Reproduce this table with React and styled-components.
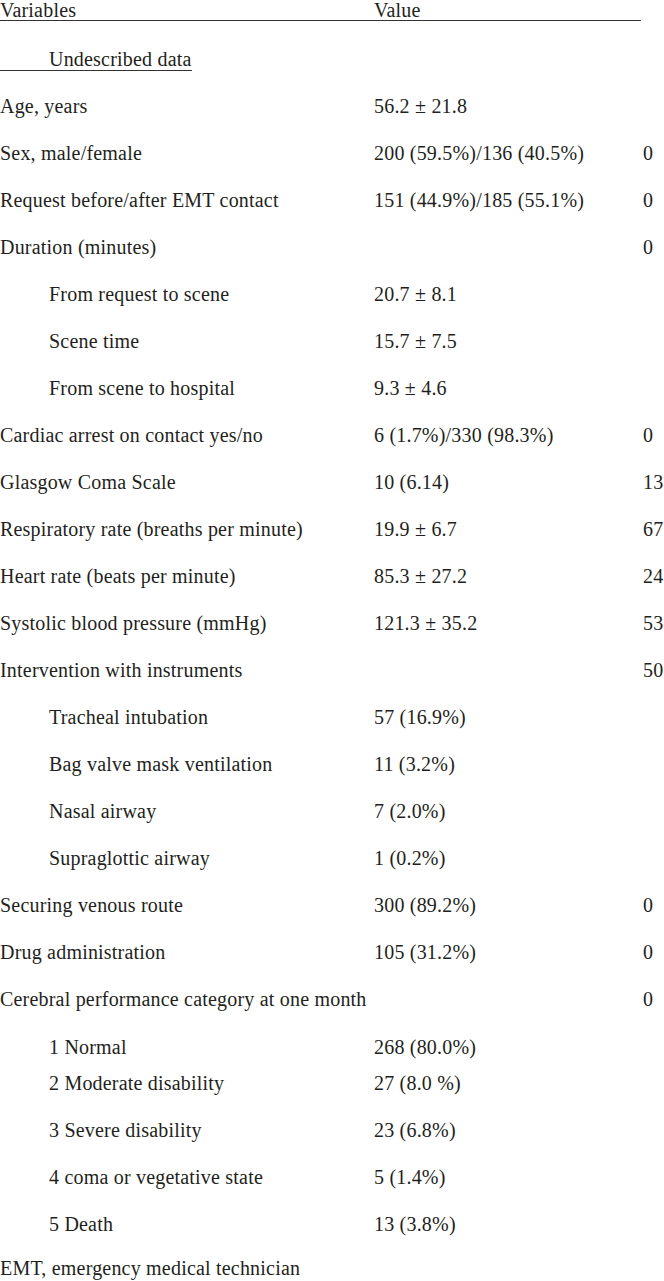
import React from "react";
import styled, { createGlobalStyle } from "styled-components";

const rows = [
	{ label: "Age, years", value: "56.2 ± 21.8" },
	{ label: "Sex, male/female", value: "200 (59.5%)/136 (40.5%)", missing: "0" },
	{ label: "Request before/after EMT contact", value: "151 (44.9%)/185 (55.1%)", missing: "0" },
	{ label: "Duration (minutes)", missing: "0" },
	{ label: "From request to scene", value: "20.7 ± 8.1", sub: true },
	{ label: "Scene time", value: "15.7 ± 7.5", sub: true },
	{ label: "From scene to hospital", value: "9.3 ± 4.6", sub: true },
	{ label: "Cardiac arrest on contact yes/no", value: "6 (1.7%)/330 (98.3%)", missing: "0" },
	{ label: "Glasgow Coma Scale", value: "10 (6.14)", missing: "13" },
	{ label: "Respiratory rate (breaths per minute)", value: "19.9 ± 6.7", missing: "67" },
	{ label: "Heart rate (beats per minute)", value: "85.3 ± 27.2", missing: "24" },
	{ label: "Systolic blood pressure (mmHg)", value: "121.3 ± 35.2", missing: "53" },
	{ label: "Intervention with instruments", missing: "50" },
	{ label: "Tracheal intubation", value: "57 (16.9%)", sub: true },
	{ label: "Bag valve mask ventilation", value: "11 (3.2%)", sub: true },
	{ label: "Nasal airway", value: "7 (2.0%)", sub: true },
	{ label: "Supraglottic airway", value: "1 (0.2%)", sub: true },
	{ label: "Securing venous route", value: "300 (89.2%)", missing: "0" },
	{ label: "Drug administration", value: "105 (31.2%)", missing: "0" },
	{ label: "Cerebral performance category at one month", missing: "0" },
	{ label: "1 Normal", value: "268 (80.0%)", sub: true, h: 48 },
	{ label: "2 Moderate disability", value: "27 (8.0 %)", sub: true, h: 36 },
	{ label: "3 Severe disability", value: "23 (6.8%)", sub: true },
	{ label: "4 coma or vegetative state", value: "5 (1.4%)", sub: true },
	{ label: "5 Death", value: "13 (3.8%)", sub: true },
];

export default function App() {
	return (
		<>
			<GlobalStyle />
			<Table>
				<Header>
					<Cell>Variables</Cell>
					<Cell>Value</Cell>
				</Header>

				<Row>
					<Cell>
						<Underlined>Undescribed data</Underlined>
					</Cell>
				</Row>

				{rows.map((r) => (
					<Row key={r.label} h={r.h}>
						<Cell $sub={r.sub}>{r.label}</Cell>
						<Cell>{r.value}</Cell>
						<Cell>{r.missing}</Cell>
					</Row>
				))}

				<Footnote>EMT, emergency medical technician</Footnote>
			</Table>
		</>
	);
}

const GlobalStyle = createGlobalStyle`
	body {
		margin: 0;
		background: #ffffff;
		color: #231f20;
		font-family: "Liberation Serif", "Times New Roman", serif;
		font-size: 20px;
		letter-spacing: 0.2px;
	}
`;

const Table = styled.div`
	display: flex;
	flex-direction: column;
	width: 664px;
`;

const Header = styled.div`
	display: grid;
	grid-template-columns: 374px 267px;
	width: 641px;
	height: 20px;
	line-height: 20px;
	margin-bottom: 3px;
	border-bottom: 1.5px solid #333;
`;

const Row = styled.div`
	display: grid;
	grid-template-columns: 374px 269px 1fr;
	align-items: end;
	height: ${(p) => p.h || 47}px;
	line-height: 23px;
	white-space: nowrap;
`;

const Cell = styled.div`
	padding-left: ${(p) => (p.$sub ? "49px" : "0")};
`;

const Underlined = styled.span`
	display: inline-block;
	padding-left: 49px;
	line-height: 21px;
	border-bottom: 1.5px solid #333;
`;

const Footnote = styled.div`
	display: flex;
	align-items: flex-end;
	height: 44px;
	line-height: 23px;
`;
